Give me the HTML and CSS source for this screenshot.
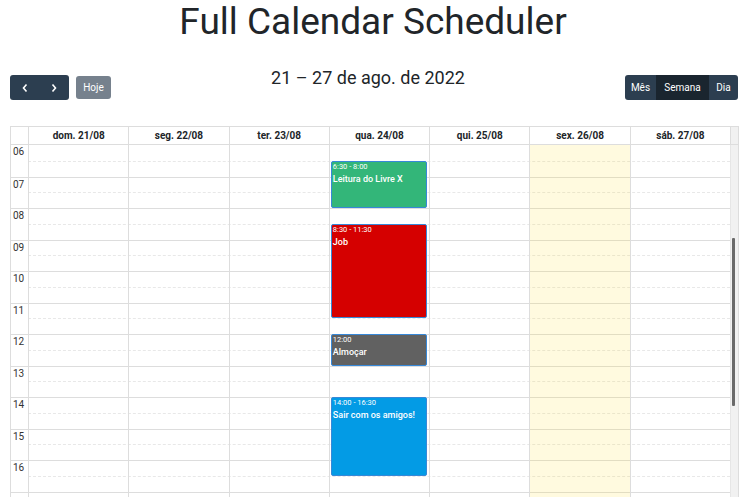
FILE: index.html
```html
<!DOCTYPE html>
<html lang="pt-BR">
<head>
<meta charset="utf-8">
<title>Full Calendar Scheduler</title>
<link rel="stylesheet" href="styles.css">
</head>
<body>
<h1 class="page-title">Full Calendar Scheduler</h1>
<div class="toolbar">
  <div class="tb-left">
    <div class="btn-group">
      <button class="btn btn-nav"><svg width="8" height="10" viewBox="0 0 8 10"><polyline points="5.5,1.5 2.5,5 5.5,8.5" fill="none" stroke="#fff" stroke-width="1.6"/></svg></button>
      <button class="btn btn-nav"><svg width="8" height="10" viewBox="0 0 8 10"><polyline points="2.5,1.5 5.5,5 2.5,8.5" fill="none" stroke="#fff" stroke-width="1.6"/></svg></button>
    </div>
    <button class="btn btn-single disabled">Hoje</button>
  </div>
  <h2 class="range">21 – 27 de ago. de 2022</h2>
  <div class="tb-right">
    <div class="btn-group">
      <button class="btn btn-mes">Mês</button>
      <button class="btn btn-semana active">Semana</button>
      <button class="btn btn-dia">Dia</button>
    </div>
  </div>
</div>

<div class="cal">
  <div class="head">
    <div class="h-axis"></div>
    <div class="h-day">dom. 21/08</div>
    <div class="h-day">seg. 22/08</div>
    <div class="h-day">ter. 23/08</div>
    <div class="h-day">qua. 24/08</div>
    <div class="h-day">qui. 25/08</div>
    <div class="h-day">sex. 26/08</div>
    <div class="h-day">sáb. 27/08</div>
    <div class="h-gutter"></div>
  </div>
  <div class="body">
    <div class="main">
      <div class="slots">
        <div class="slot hour"><div class="axis">06</div><div class="lane"></div></div>
        <div class="slot half"><div class="axis"></div><div class="lane"></div></div>
        <div class="slot hour"><div class="axis">07</div><div class="lane"></div></div>
        <div class="slot half"><div class="axis"></div><div class="lane"></div></div>
        <div class="slot hour"><div class="axis">08</div><div class="lane"></div></div>
        <div class="slot half"><div class="axis"></div><div class="lane"></div></div>
        <div class="slot hour"><div class="axis">09</div><div class="lane"></div></div>
        <div class="slot half"><div class="axis"></div><div class="lane"></div></div>
        <div class="slot hour"><div class="axis">10</div><div class="lane"></div></div>
        <div class="slot half"><div class="axis"></div><div class="lane"></div></div>
        <div class="slot hour"><div class="axis">11</div><div class="lane"></div></div>
        <div class="slot half"><div class="axis"></div><div class="lane"></div></div>
        <div class="slot hour"><div class="axis">12</div><div class="lane"></div></div>
        <div class="slot half"><div class="axis"></div><div class="lane"></div></div>
        <div class="slot hour"><div class="axis">13</div><div class="lane"></div></div>
        <div class="slot half"><div class="axis"></div><div class="lane"></div></div>
        <div class="slot hour"><div class="axis">14</div><div class="lane"></div></div>
        <div class="slot half"><div class="axis"></div><div class="lane"></div></div>
        <div class="slot hour"><div class="axis">15</div><div class="lane"></div></div>
        <div class="slot half"><div class="axis"></div><div class="lane"></div></div>
        <div class="slot hour"><div class="axis">16</div><div class="lane"></div></div>
        <div class="slot half"><div class="axis"></div><div class="lane"></div></div>
        <div class="slot hour"><div class="axis"></div><div class="lane"></div></div>
      </div>
      <div class="cols">
        <div class="col"></div>
        <div class="col"></div>
        <div class="col"></div>
        <div class="col">
          <div class="event ev-green" style="top:15.75px;height:47.25px"><div class="ev-time">6:30 - 8:00</div><div class="ev-title">Leitura do Livre X</div></div>
          <div class="event ev-red" style="top:78.75px;height:94.5px"><div class="ev-time">8:30 - 11:30</div><div class="ev-title">Job</div></div>
          <div class="event ev-gray" style="top:189px;height:31.5px"><div class="ev-time">12:00</div><div class="ev-title">Almoçar</div></div>
          <div class="event ev-blue" style="top:252px;height:78.75px"><div class="ev-time">14:00 - 16:30</div><div class="ev-title">Sair com os amigos!</div></div>
        </div>
        <div class="col"></div>
        <div class="col today"></div>
        <div class="col"></div>
      </div>
    </div>
    <div class="gutter"><div class="thumb"></div></div>
  </div>
</div>
</body>
</html>
```
FILE: styles.css
```css
* { box-sizing: border-box; }
html, body { margin: 0; padding: 0; background: #fff; }
body {
  font-family: Roboto, "Liberation Sans", Arial, sans-serif;
  color: #212529;
  height: 497px;
  overflow: hidden;
}
.page-title {
  margin: 0;
  font-size: 37px;
  line-height: 44px;
  font-weight: 400;
  text-align: center;
  color: #212529;
}
.toolbar {
  margin-top: 24px;
  padding: 0 8px 0 10px;
  display: flex;
  justify-content: space-between;
  align-items: flex-start;
  height: 58px;
}
.tb-left, .tb-right {
  display: flex;
  gap: 7px;
  margin-top: 7px;
}
.range {
  margin: 0;
  font-size: 18px;
  line-height: 20px;
  font-weight: 400;
  color: #212529;
}
.btn-group { display: flex; border-radius: 3px; overflow: hidden; height: 25px; }
.btn {
  border: 0;
  margin: 0;
  height: 25px;
  padding: 0;
  background: #2c3e50;
  color: #fff;
  font-family: Roboto, "Liberation Sans", Arial, sans-serif;
  font-size: 10px;
  display: flex;
  align-items: center;
  justify-content: center;
  flex: none;
}
.btn-nav { width: 29.5px; }
.btn-single { border-radius: 3px; width: 35px; margin-top: 1px; height: 23px; }
.disabled { background: #76818d; }
.btn-mes { width: 31px; }
.btn-semana { width: 53px; }
.btn-dia { width: 29px; }
.active { background: #1a252f; }

.cal {
  margin-left: 10px;
  width: 729px;
  border-left: 1px solid #ddd;
  border-top: 1px solid #ddd;
  border-right: 1px solid #ddd;
}
.head {
  display: grid;
  grid-template-columns: 17px repeat(7, 1fr) 8px;
  height: 18px;
  border-bottom: 1px solid #ddd;
}
.h-day {
  border-left: 1px solid #ddd;
  font-size: 10px;
  font-weight: 700;
  text-align: center;
  line-height: 17px;
  color: #212529;
}
.h-gutter { background: #f1f1f1; border-left: 1px solid #ddd; }
.body { display: flex; }
.main { flex: 1; position: relative; }
.slot { display: flex; height: 15.75px; }
.slot.hour { border-top: 1px solid #ddd; }
.slot.hour:first-child { border-top: 0; }
.axis {
  width: 17px;
  font-size: 10px;
  line-height: 14px;
  padding-left: 2px;
  color: #333;
}
.lane { flex: 1; }
.slot.half .lane { border-top: 1px dashed #e8e8e8; }
.cols {
  position: absolute;
  top: 0; bottom: 0; left: 17px; right: 0;
  display: grid;
  grid-template-columns: repeat(7, 1fr);
}
.col { position: relative; border-left: 1px solid #ddd; }
.today { background: rgba(255, 220, 40, 0.15); }
.gutter { width: 8px; background: #f1f1f1; position: relative; border-left: 1px solid #e6e6e6; }
.thumb {
  position: absolute;
  left: 1px;
  top: 93px;
  width: 3px;
  height: 168px;
  background: #6a6a6a;
  border-radius: 1px;
}
.event {
  position: absolute;
  left: 1px;
  right: 2px;
  border: 1px solid #3788d8;
  border-radius: 2px;
  color: #fff;
  padding: 0 1px;
  overflow: hidden;
}
.ev-time { font-size: 7.5px; line-height: 10px; }
.ev-title { font-size: 9px; line-height: 15px; font-weight: 500; }
.ev-green { background: #33b679; }
.ev-red { background: #d50000; }
.ev-gray { background: #616161; }
.ev-blue { background: #039be5; }
```
